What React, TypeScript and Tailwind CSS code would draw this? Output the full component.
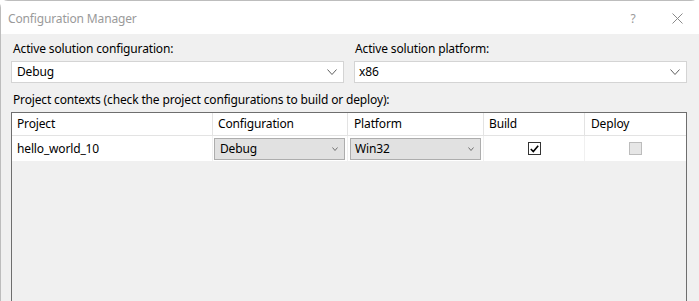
import React from "react";

function Chevron({ w = 10, h = 6, color = "#606060" }: { w?: number; h?: number; color?: string }) {
  return (
    <svg width={w} height={h} viewBox={`0 0 ${w} ${h}`} fill="none">
      <path d={`M0.5 0.5 L${w / 2} ${h - 0.5} L${w - 0.5} 0.5`} stroke={color} strokeWidth="1" />
    </svg>
  );
}

export default function App() {
  const font = { fontFamily: '"Noto Sans", "Segoe UI", sans-serif' };
  return (
    <div className="w-[699px] h-[301px] overflow-hidden bg-white text-[12px] tracking-[-0.15px] text-black" style={font}>
      <div className="h-full flex flex-col rounded-t-[8px] border-t border-l border-[#bdbdbd] bg-white">
        {/* title bar */}
        <div className="h-[33px] flex items-center pl-[7px] pt-[2px] bg-white">
          <span className="text-[#9a9a9a] text-[12px] flex-1">Configuration Manager</span>
          <span className="w-[20px] text-center text-[#9a9a9a] text-[12px] mr-[29px]">?</span>
          <span className="mr-[16px] flex items-center">
            <svg width="11" height="11" viewBox="0 0 11 11">
              <path d="M0.5 0.5 L10.5 10.5 M10.5 0.5 L0.5 10.5" stroke="#8a8a8a" strokeWidth="1" />
            </svg>
          </span>
        </div>
        {/* body */}
        <div className="flex-1 bg-[#f0f0f0] pl-[10px] pr-[12px] pt-[5px] flex flex-col">
          <div className="flex gap-[10px]">
            <div className="flex-1 flex flex-col">
              <div className="h-[20px] leading-[20px] pl-[2px]">Active solution configuration:</div>
              <div className="mt-[2px] h-[22px] bg-white border border-[#d4d4d4] flex items-center pl-[5px] pr-[6px]">
                <span className="flex-1">Debug</span>
                <Chevron />
              </div>
            </div>
            <div className="flex-1 flex flex-col">
              <div className="h-[20px] leading-[20px] pl-[1px]">Active solution platform:</div>
              <div className="mt-[2px] h-[22px] bg-white border border-[#d4d4d4] flex items-center pl-[4px] pr-[6px]">
                <span className="flex-1">x86</span>
                <Chevron />
              </div>
            </div>
          </div>
          <div className="mt-[8px] h-[18px] leading-[18px] pl-[2px]">
            Project contexts (check the project configurations to build or deploy):
          </div>
          <div className="mt-[3px] flex-1 border-l border-r border-t border-[#6e6e6e] flex flex-col">
            <div className="h-[23px] bg-white flex border-b border-[#e3e3e3]">
              <div className="w-[201px] border-r border-[#e3e3e3] pl-[5px] flex items-center">Project</div>
              <div className="w-[135px] border-r border-[#e3e3e3] pl-[5px] flex items-center">Configuration</div>
              <div className="w-[136px] border-r border-[#e3e3e3] pl-[6px] flex items-center">Platform</div>
              <div className="w-[101px] border-r border-[#e3e3e3] pl-[5px] flex items-center">Build</div>
              <div className="flex-1 pl-[6px] flex items-center">Deploy</div>
            </div>
            <div className="h-[25px] bg-white flex">
              <div className="w-[201px] border-r border-[#f0f0f0] pl-[5px] flex items-center">hello_world_10</div>
              <div className="w-[135px] border-r border-[#f0f0f0] flex items-center pl-[1px] pr-[2px]">
                <div className="w-full h-[22px] bg-[#e1e1e1] border border-[#adadad] flex items-center pl-[5px] pr-[6px]">
                  <span className="flex-1">Debug</span>
                  <Chevron w={6} h={4} color="#707070" />
                </div>
              </div>
              <div className="w-[136px] border-r border-[#f0f0f0] flex items-center pl-[2px] pr-[2px]">
                <div className="w-full h-[22px] bg-[#e1e1e1] border border-[#adadad] flex items-center pl-[4px] pr-[6px]">
                  <span className="flex-1">Win32</span>
                  <Chevron w={6} h={4} color="#707070" />
                </div>
              </div>
              <div className="w-[101px] border-r border-[#f0f0f0] flex items-center justify-center">
                <div className="w-[13px] h-[13px] bg-white border border-[#333333] flex items-center justify-center">
                  <svg width="9" height="8" viewBox="0 0 9 8">
                    <path d="M0.8 4 L3.3 6.6 L8.2 0.8" stroke="#000" strokeWidth="1.6" fill="none" />
                  </svg>
                </div>
              </div>
              <div className="flex-1 flex items-center justify-center">
                <div className="w-[13px] h-[13px] bg-[#e6e6e6] border border-[#bcbcbc]" />
              </div>
            </div>
            <div className="flex-1 bg-[#f0f0f0]" />
          </div>
        </div>
      </div>
    </div>
  );
}
